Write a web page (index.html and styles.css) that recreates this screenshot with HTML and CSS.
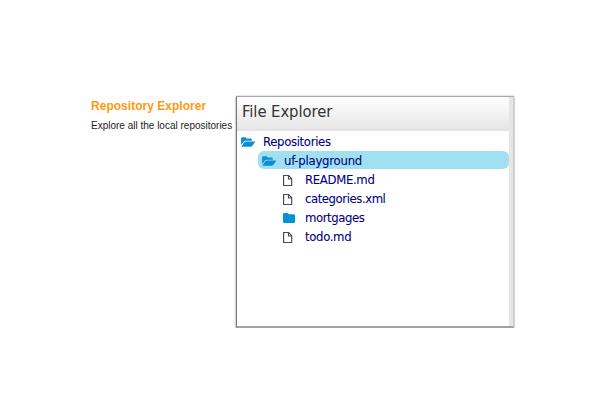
FILE: index.html
```html
<!DOCTYPE html>
<html lang="en">
<head>
<meta charset="utf-8">
<title>Repository Explorer</title>
<link rel="stylesheet" href="styles.css">
</head>
<body>
<svg class="defs" width="0" height="0" aria-hidden="true">
  <symbol id="open" viewBox="0 0 14 10"><path d="M.1 8V1.5Q.1.3 1.3.3h3q1 0 1 1.1h4.3q1.2 0 1.2 1.2v1.2H4.6Q3.4 3.8 2.8 4.7z"/><path d="M.3 9.8 3.3 5.3q.5-.8 1.4-.8h9q.6 0 .2.7l-2.7 3.9q-.5.7-1.4.7z"/></symbol>
  <symbol id="folder" viewBox="0 0 12 10"><path d="M0 1.3Q0 0 1.3 0h3q1.2 0 1.2 1.3h5.2Q12 1.3 12 2.6v6.1Q12 10 10.7 10H1.3Q0 10 0 8.7z"/></symbol>
  <symbol id="file" viewBox="0 0 10 12"><path d="M.6 1h5.1l3 3.2V11H.6zM5.5 1v3.5h3.2" fill="none" stroke="#444c54" stroke-width="1.15"/></symbol>
</svg>
<main class="page">
  <section class="intro">
    <h1 class="title">Repository Explorer</h1>
    <p class="summary">Explore all the local repositories</p>
  </section>
  <section class="panel">
    <div class="content">
      <h2 class="header"><span class="heading">File Explorer</span></h2>
      <ul class="tree">
        <li class="row root"><svg class="icon open"><use href="#open"/></svg><span class="label">Repositories</span></li>
        <li class="row selected"><svg class="icon open"><use href="#open"/></svg><span class="label loose">uf-playground</span></li>
        <li class="row leaf"><svg class="icon file"><use href="#file"/></svg><span class="label">README.md</span></li>
        <li class="row leaf"><svg class="icon file"><use href="#file"/></svg><span class="label tight">categories.xml</span></li>
        <li class="row leaf"><svg class="icon folder"><use href="#folder"/></svg><span class="label tight">mortgages</span></li>
        <li class="row leaf"><svg class="icon file"><use href="#file"/></svg><span class="label">todo.md</span></li>
      </ul>
    </div>
    <div class="gutter"></div>
  </section>
</main>
</body>
</html>
```
FILE: styles.css
```css
* { box-sizing: border-box; }
body { margin: 0; background: #fff; }
.defs { display: block; }
.page { display: flex; align-items: flex-start; padding: 96px 0 0 91px; }
.intro { width: 145px; padding-top: 2px; font-family: "Liberation Sans", sans-serif; white-space: nowrap; }
.title { margin: 0; color: #ff9912; font-size: 12px; line-height: 16px; letter-spacing: .02px; }
.summary { margin: 5px 0 0; color: #222; font-size: 10px; line-height: 14px; }
.panel {
  display: flex; width: 278px; height: 232px; background: #fff;
  border: 1px solid #aaa; border-left-color: #777; border-right-color: #ccc; border-bottom: 2px solid #a2a2a2;
  box-shadow: 0 0 2px rgba(0, 0, 0, .25), 0 1px 2px rgba(0, 0, 0, .25);
}
.content { width: 272px; font-family: "DejaVu Sans Condensed", "DejaVu Sans", sans-serif; font-stretch: condensed; }
.gutter { flex: 1; background: #e5e5e5; }
.header {
  height: 34px; margin: 0; padding-left: 5px; background: linear-gradient(#fff, #e4e4e4);
  color: #333; font-size: 16.5px; font-weight: 400; line-height: 30px; letter-spacing: -.07px;
}
.tree { margin: 0; padding: 1px 0 0; list-style: none; }
.row { display: flex; align-items: center; height: 19px; color: #000080; font-size: 13px; line-height: 19px; white-space: nowrap; }
.label { letter-spacing: -.34px; -webkit-text-stroke: .08px #000080; }
.loose { letter-spacing: -.24px; }
.tight { letter-spacing: -.44px; }
.icon { flex: none; fill: #0790d2; }
.open { width: 14px; height: 10px; margin-right: 8px; }
.folder { width: 12px; height: 10px; margin-right: 10px; }
.file { width: 10px; height: 12px; margin-right: 12px; }
.root { padding-left: 4px; }
.selected { height: 18px; margin: 0 0 1px 21px; padding: 1px 0 0 4px; background: #a0e0f1; border-radius: 6px; }
.leaf { padding-left: 46px; }
.leaf .file { transform: translateY(.5px); }
```
